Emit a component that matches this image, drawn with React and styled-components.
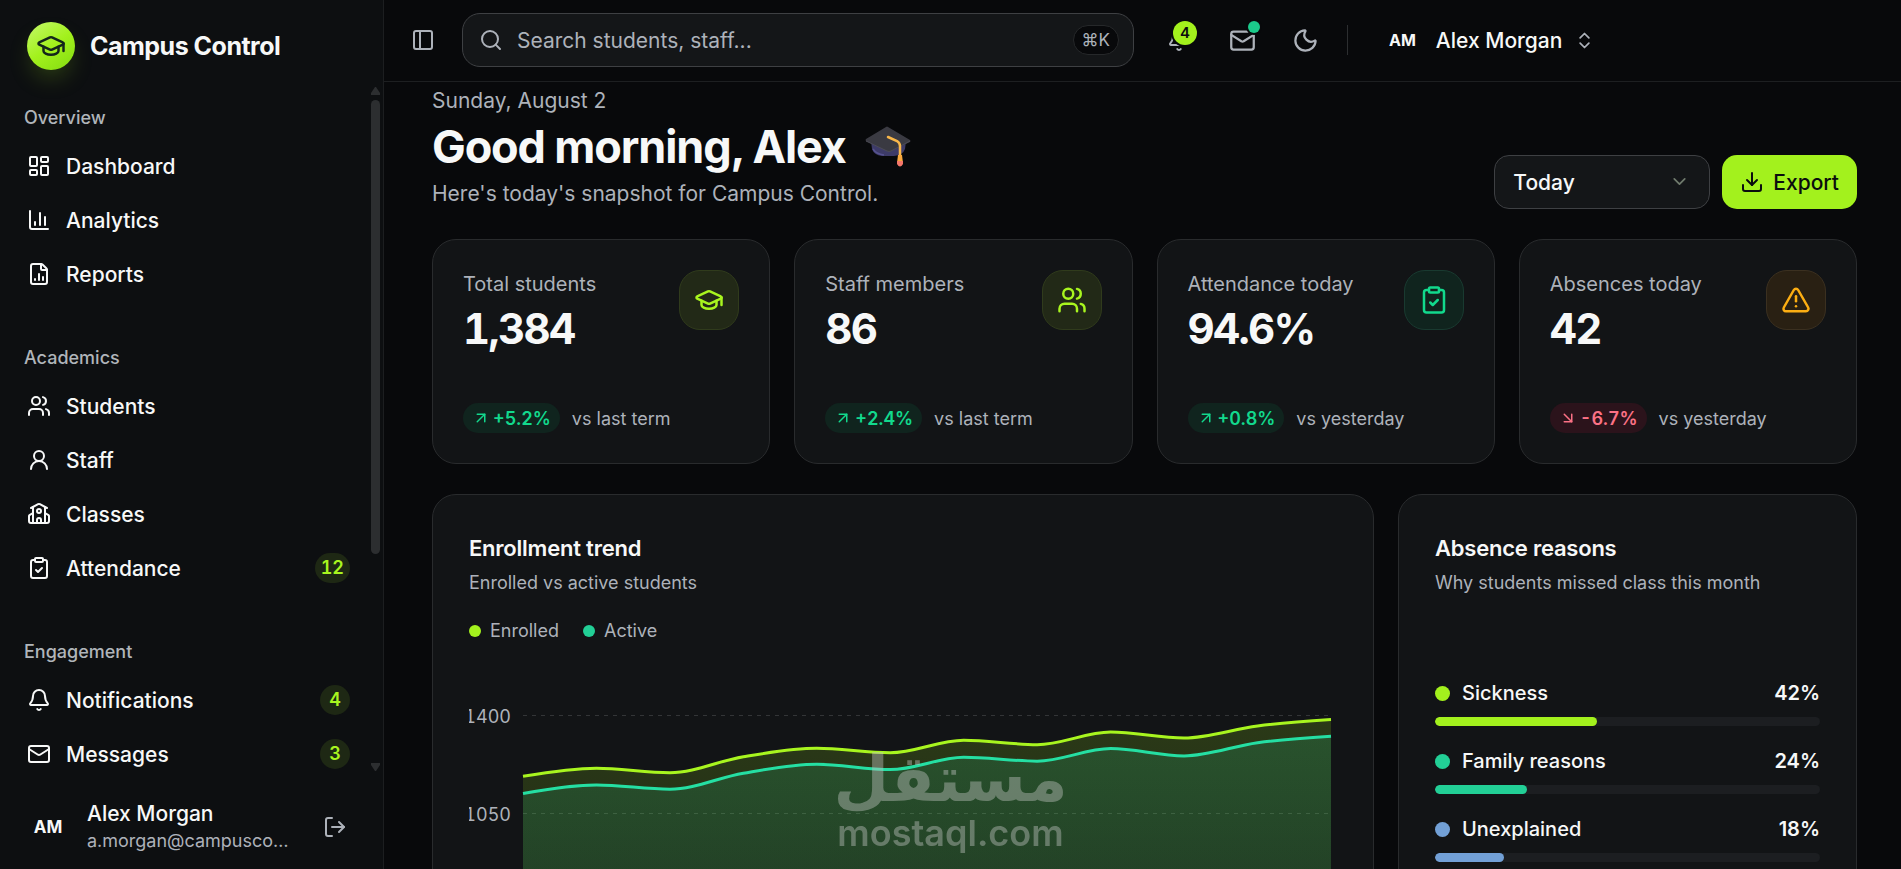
import React, { useState } from 'react';
import styled, { createGlobalStyle } from 'styled-components';
import {
  LayoutDashboard,
  ChartColumn,
  FileChartColumn,
  Users,
  UserRound,
  School,
  ClipboardCheck,
  Bell,
  Mail,
  LogOut,
  PanelLeft,
  Search,
  Moon,
  ChevronsUpDown,
  ChevronDown,
  Download,
  GraduationCap,
  TriangleAlert,
  ArrowUpRight,
  ArrowDownRight,
} from 'lucide-react';

const GlobalStyle = createGlobalStyle`
  * {
    box-sizing: border-box;
  }
  body {
    margin: 0;
    background: #08090b;
    color: #f7f8f8;
    font-family: Inter, 'Liberation Sans', sans-serif;
    font-size: 18px;
    overflow: hidden;
  }
  h1, h2, p, ul {
    margin: 0;
    padding: 0;
  }
  ul {
    list-style: none;
  }
  button, input, select {
    font-family: inherit;
    color: inherit;
  }
  button {
    padding: 0;
    border: 0;
    background: none;
    cursor: pointer;
  }
`;

const Layout = styled.div`
  display: grid;
  grid-template-columns: 384px minmax(0, 1fr);
  height: 100vh;
  overflow: hidden;
`;

const Sidebar = styled.aside`
  display: flex;
  flex-direction: column;
  min-height: 0;
  background: #0d0f11;
  border-right: 1px solid #1c1e20;
`;

const Brand = styled.div`
  display: flex;
  align-items: center;
  gap: 15px;
  padding: 22px 27px 14px;
  font-size: 25px;
  line-height: 48px;
  font-weight: 700;
  letter-spacing: -0.02em;

  .logo {
    display: grid;
    place-items: center;
    width: 48px;
    height: 48px;
    border-radius: 50%;
    color: #14261b;
    background: linear-gradient(145deg, #c5f96c 0%, #a3f11d 50%, #83dc10 100%);
    box-shadow: 0 12px 24px -6px rgba(163, 241, 29, 0.25);
  }
`;

const NavArea = styled.div`
  flex: 1;
  display: flex;
  min-height: 0;
`;

const Nav = styled.nav`
  flex: 1;
  display: flex;
  flex-direction: column;
  gap: 36px;
  padding: 13px 21px 0 24px;
  overflow: hidden;
`;

const GroupLabel = styled.p`
  height: 42px;
  line-height: 42px;
  font-size: 18px;
  font-weight: 500;
  color: #b0b5ba;
`;

const NavLink = styled.a`
  display: flex;
  align-items: center;
  gap: 15px;
  height: 54px;
  padding-left: 3px;
  font-size: 21px;
  font-weight: 500;
  color: #f7f8f8;
  text-decoration: none;

  .count {
    min-width: 30px;
    height: 30px;
    margin-left: auto;
    padding: 0 6px;
    border-radius: 15px;
    background: #1e2814;
    color: #a8f51f;
    font-size: 18px;
    font-weight: 600;
    font-variant-numeric: tabular-nums;
    line-height: 30px;
    text-align: center;
  }
`;

const Scrollbar = styled.div`
  display: flex;
  flex-direction: column;
  align-items: center;
  width: 12px;
  padding: 3px 3px 2px 0;

  .thumb {
    width: 9px;
    height: 454px;
    margin: 5px 0 auto;
    border-radius: 5px;
    background: #2c2e30;
  }
`;

const ScrollArrow = styled.svg`
  width: 9px;
  height: 8px;
  fill: #2c2e30;
`;

const Account = styled.div`
  display: flex;
  align-items: center;
  gap: 15px;
  padding: 27px 36px 15px 24px;

  .avatar {
    width: 48px;
    font-size: 17px;
    font-weight: 700;
    text-align: center;
  }
  .who {
    flex: 1;
    min-width: 0;
    margin-right: 18px;
  }
  .name {
    font-size: 21px;
    line-height: 27px;
    font-weight: 500;
  }
  .email {
    overflow: hidden;
    color: #adb2ba;
    font-size: 18px;
    line-height: 27px;
    text-overflow: ellipsis;
    white-space: nowrap;
  }
  button {
    display: flex;
    color: #adb2ba;
  }
`;

const Page = styled.div`
  display: flex;
  flex-direction: column;
  min-height: 0;
`;

const Topbar = styled.header`
  flex: none;
  display: flex;
  align-items: center;
  height: 82px;
  padding: 0 27px 1px;
  border-bottom: 1px solid #1d1f21;
`;

const SearchBox = styled.label`
  display: flex;
  align-items: center;
  gap: 14px;
  flex: 0 1 672px;
  height: 54px;
  margin: 0 15px 0 27px;
  padding: 0 14px 0 16px;
  border: 1px solid #3e4043;
  border-radius: 18px;
  background: #141618;
  color: #adb2ba;

  input {
    flex: 1;
    min-width: 0;
    padding: 0;
    border: 0;
    outline: 0;
    background: none;
    font-size: 21px;
  }
  input::placeholder {
    color: #adb2ba;
    opacity: 1;
  }
  kbd {
    padding: 0 8px;
    border: 1px solid #26282a;
    border-radius: 15px;
    background: #08090b;
    font-family: inherit;
    font-size: 17px;
    line-height: 28px;
  }
`;

const IconButton = styled.button`
  position: relative;
  display: grid;
  place-items: center;
  width: ${({ $narrow }) => ($narrow ? 24 : 60)}px;
  height: 54px;
  margin-right: ${({ $narrow }) => ($narrow ? 0 : 3)}px;
  color: #adb2ba;

  .badge {
    position: absolute;
    top: 8px;
    right: 12px;
    width: 24px;
    height: 24px;
    border-radius: 50%;
    background: #a3f11d;
    box-shadow: 0 0 0 2px #08090b;
    color: #0b0d0e;
    font-size: 15px;
    font-weight: 600;
    line-height: 24px;
  }
  .dot {
    position: absolute;
    top: 8px;
    right: 12px;
    width: 12px;
    height: 12px;
    border-radius: 50%;
    background: #1bcb8b;
    box-shadow: 0 0 0 2px #08090b;
  }
`;

const Divider = styled.span`
  width: 1px;
  height: 30px;
  margin: 0 41px 0 9px;
  background: #2c2e30;
`;

const UserMenu = styled.button`
  display: flex;
  align-items: center;
  gap: 20px;
  font-size: 21px;
  font-weight: 500;

  .initials {
    font-size: 16px;
    font-weight: 700;
  }
  svg {
    margin-left: -8px;
    color: #adb2ba;
  }
`;

const Content = styled.main`
  flex: 1;
  min-height: 0;
  padding: 4px 44px 0 48px;
  overflow: hidden;
`;

const Intro = styled.section`
  display: flex;
  align-items: flex-end;
  justify-content: space-between;
  margin-bottom: 30px;
  color: #adb2ba;
  font-size: 21px;
  line-height: 30px;

  h1 {
    display: flex;
    align-items: center;
    gap: 18px;
    margin: 2px 0 4px;
    color: #f7f8f8;
    font-size: 45px;
    line-height: 57px;
    font-weight: 700;
    letter-spacing: -0.025em;
  }
`;

const Actions = styled.div`
  display: flex;
  gap: 12px;
`;

const Period = styled.div`
  position: relative;
  width: 216px;
  color: #adb2ba;

  select {
    appearance: none;
    width: 100%;
    height: 54px;
    padding: 0 48px 0 18px;
    border: 1px solid #3e4043;
    border-radius: 15px;
    background: #141618;
    color: #f7f8f8;
    font-size: 21px;
    font-weight: 500;
  }
  svg {
    position: absolute;
    top: 16px;
    right: 20px;
    color: #6f7a6c;
    pointer-events: none;
  }
`;

const ExportButton = styled.button`
  display: flex;
  align-items: center;
  justify-content: center;
  gap: 9px;
  height: 54px;
  padding: 0 18px;
  border-radius: 15px;
  background: #a3f11d;
  color: #0b0d0e;
  font-size: 21px;
  font-weight: 500;
`;

const Grid = styled.div`
  display: grid;
  grid-template-columns: repeat(12, minmax(0, 1fr));
  column-gap: 24px;
  row-gap: 30px;
`;

const Card = styled.section`
  grid-column: span ${({ $span }) => $span};
  padding: ${({ $pad }) => $pad || 36}px;
  border: 1px solid #292b2d;
  border-radius: 24px;
  background: #121416;
`;

const StatTop = styled.div`
  display: flex;
  justify-content: space-between;
  height: 133px;
`;

const StatLabel = styled.p`
  color: #adb2ba;
  font-size: 20px;
  line-height: 28px;
`;

const StatValue = styled.p`
  font-size: 42px;
  line-height: 62px;
  font-weight: 700;
  font-variant-numeric: tabular-nums;
  letter-spacing: -0.04em;
`;

const tones = {
  lime: { color: '#a8f51f', tint: '#222917', edge: '#303b1c' },
  green: { color: '#12d98d', tint: '#10241e', edge: '#193a30' },
  amber: { color: '#fcae13', tint: '#292013', edge: '#3b3020' },
  red: { color: '#fb7185', tint: '#2b131b', edge: '#2b131b' },
};

const IconTile = styled.span`
  display: grid;
  place-items: center;
  width: 60px;
  height: 60px;
  border: 1px solid ${({ $tone }) => tones[$tone].edge};
  border-radius: 21px;
  background: ${({ $tone }) => tones[$tone].tint};
  color: ${({ $tone }) => tones[$tone].color};
`;

const StatFoot = styled.div`
  display: flex;
  align-items: center;
  gap: 12px;
  color: #adb2ba;
  font-size: 18px;
`;

const Delta = styled.span`
  display: flex;
  align-items: center;
  gap: 3px;
  height: 30px;
  padding: 0 9px;
  border-radius: 15px;
  background: ${({ $tone }) => tones[$tone].tint};
  color: ${({ $tone }) => tones[$tone].color};
  font-weight: 600;
  font-variant-numeric: tabular-nums;
`;

const CardTitle = styled.h2`
  font-size: 22px;
  line-height: 34px;
  font-weight: 600;
  letter-spacing: -0.01em;
`;

const CardNote = styled.p`
  margin-top: 3px;
  color: #adb2ba;
  font-size: 18px;
  line-height: 30px;
`;

const Legend = styled.ul`
  display: flex;
  gap: 24px;
  margin-top: 18px;
  color: #adb2ba;
  font-size: 18px;
  line-height: 30px;

  li {
    display: flex;
    align-items: center;
    gap: 9px;
  }
`;

const Dot = styled.span`
  width: ${({ $size }) => $size}px;
  height: ${({ $size }) => $size}px;
  border-radius: 50%;
  background: ${({ $color }) => $color};
`;

const Chart = styled.div`
  display: flex;
  margin-top: 69px;
  padding-right: 6px;

  svg {
    flex: 1;
    min-width: 0;
    height: 392px;
    overflow: visible;
  }
`;

const Ticks = styled.ul`
  width: 54px;
  padding-right: 12px;
  margin-top: -13px;
  color: #adb2ba;
  font-size: 18px;
  font-variant-numeric: tabular-nums;
  line-height: 30px;

  li {
    display: flex;
    justify-content: flex-end;
    height: 98px;
    overflow: hidden;
  }
`;

const Reasons = styled.ul`
  display: flex;
  flex-direction: column;
  gap: 20px;
  margin-top: 80px;
`;

const Reason = styled.li`
  font-size: 20px;
  line-height: 30px;
  font-weight: 500;

  .row {
    display: flex;
    align-items: center;
    gap: 12px;
  }
  .share {
    margin-left: auto;
    font-weight: 600;
  }
  .track {
    height: 9px;
    margin-top: 9px;
    border-radius: 5px;
    background: #1c1e21;
    overflow: hidden;
  }
  .fill {
    height: 100%;
    border-radius: 5px;
  }
`;

const Watermark = styled.div`
  position: fixed;
  right: 0;
  bottom: 18px;
  left: 0;
  color: #c3c6c3;
  opacity: 0.42;
  text-align: center;
  pointer-events: none;

  .ar {
    font-family: 'DejaVu Sans', sans-serif;
    font-size: 64px;
    line-height: 72px;
    font-weight: 700;
  }
  .en {
    font-size: 36px;
    line-height: 36px;
    font-weight: 600;
  }
`;

const navGroups = [
  {
    label: 'Overview',
    items: [
      { name: 'Dashboard', Icon: LayoutDashboard },
      { name: 'Analytics', Icon: ChartColumn },
      { name: 'Reports', Icon: FileChartColumn },
    ],
  },
  {
    label: 'Academics',
    items: [
      { name: 'Students', Icon: Users },
      { name: 'Staff', Icon: UserRound },
      { name: 'Classes', Icon: School },
      { name: 'Attendance', Icon: ClipboardCheck, count: 12 },
    ],
  },
  {
    label: 'Engagement',
    items: [
      { name: 'Notifications', Icon: Bell, count: 4 },
      { name: 'Messages', Icon: Mail, count: 3 },
    ],
  },
];

const stats = [
  { label: 'Total students', value: '1,384', Icon: GraduationCap, tone: 'lime', delta: '+5.2%', since: 'vs last term' },
  { label: 'Staff members', value: '86', Icon: Users, tone: 'lime', delta: '+2.4%', since: 'vs last term' },
  { label: 'Attendance today', value: '94.6%', Icon: ClipboardCheck, tone: 'green', delta: '+0.8%', since: 'vs yesterday' },
  { label: 'Absences today', value: '42', Icon: TriangleAlert, tone: 'amber', delta: '-6.7%', since: 'vs yesterday' },
];

const reasons = [
  { name: 'Sickness', share: 42, color: '#a3f11d' },
  { name: 'Family reasons', share: 24, color: '#22cf96' },
  { name: 'Unexplained', share: 18, color: '#72a0d6' },
];

const enrolled = [1181, 1210, 1194, 1251, 1281, 1265, 1310, 1294, 1339, 1318, 1361, 1384];
const active = [1120, 1150, 1135, 1192, 1224, 1205, 1249, 1235, 1280, 1254, 1301, 1324];
const gridLines = [1400, 1050, 700, 350];
const ticks = [1400, 1050];

const CHART_W = 808;
const CHART_H = 392;
const CHART_MAX = 1400;

// monotone cubic, so the line never overshoots a month's value
const linePath = (values) => {
  const step = CHART_W / (values.length - 1);
  const y = values.map((v) => CHART_H * (1 - v / CHART_MAX));
  const slope = y.slice(1).map((v, i) => (v - y[i]) / step);
  const m = y.map((_, i) => {
    if (i === 0 || i === y.length - 1) return null;
    const a = slope[i - 1];
    const b = slope[i];
    if (a * b <= 0) return 0;
    return Math.sign(a) * 2 * Math.min(Math.abs(a), Math.abs(b), Math.abs(a + b) / 4);
  });
  m[0] = (3 * slope[0] - m[1]) / 2;
  m[m.length - 1] = (3 * slope[slope.length - 1] - m[m.length - 2]) / 2;

  return y.reduce((d, v, i) => {
    if (i === 0) return `M0,${v}`;
    const x0 = (i - 1) * step;
    const x1 = i * step;
    const c = step / 3;
    return `${d}C${x0 + c},${y[i - 1] + m[i - 1] * c} ${x1 - c},${v - m[i] * c} ${x1},${v}`;
  }, '');
};

const areaPath = (values) => `${linePath(values)}V${CHART_H}H0Z`;

const CapEmoji = () => (
  <svg width="48" height="48" viewBox="0 0 48 48" role="img" aria-label="graduation cap">
    <path d="M7 18 L8 26 Q10 32 18 33 L30 33 Q39 32 41 26 L42 18 Z" fill="#3d3b68" />
    <path d="M9 26 Q12 31 20 32" fill="none" stroke="#565291" strokeWidth="1.5" />
    <path d="M24 4 L46 17 Q47 18 46 19 L27 28 Q25 29 23 28 L2 18 Q1 17 2 16 L22 4 Q23 3 24 4 Z" fill="#3a3a42" />
    <path d="M2 18 L23 28 Q25 29 27 28 L46 18" fill="none" stroke="#4c4c56" strokeWidth="1" />
    <path d="M24 14 L33 18 Q36 20 36 23 V33" fill="none" stroke="#f9b74a" strokeWidth="2.5" strokeLinecap="round" />
    <path d="M34 32 h4 l1 8 q-3 5 -6 0 Z" fill="#f9a83f" />
    <path d="M33 38 h6 v3 q-3 5 -6 0 Z" fill="#f4766a" />
  </svg>
);

const App = () => {
  const [period, setPeriod] = useState('Today');

  return (
    <>
      <GlobalStyle />
      <Layout>
        <Sidebar>
          <Brand>
            <span className="logo">
              <GraduationCap size={30} />
            </span>
            Campus Control
          </Brand>
          <NavArea>
            <Nav>
              {navGroups.map((group) => (
                <div key={group.label}>
                  <GroupLabel>{group.label}</GroupLabel>
                  {group.items.map(({ name, Icon, count }) => (
                    <NavLink key={name} href={`#${name.toLowerCase()}`}>
                      <Icon size={24} />
                      {name}
                      {count && <span className="count">{count}</span>}
                    </NavLink>
                  ))}
                </div>
              ))}
            </Nav>
            <Scrollbar aria-hidden="true">
              <ScrollArrow viewBox="0 0 9 8">
                <path d="M4 0h1l4 6v2H0V6z" />
              </ScrollArrow>
              <span className="thumb" />
              <ScrollArrow viewBox="0 0 9 8">
                <path d="M0 0h9v2L5 8H4L0 2z" />
              </ScrollArrow>
            </Scrollbar>
          </NavArea>
          <Account>
            <span className="avatar">AM</span>
            <div className="who">
              <p className="name">Alex Morgan</p>
              <p className="email">a.morgan@campuscontrol.edu</p>
            </div>
            <button type="button" aria-label="Log out">
              <LogOut size={24} />
            </button>
          </Account>
        </Sidebar>

        <Page>
          <Topbar>
            <IconButton type="button" $narrow aria-label="Toggle sidebar">
              <PanelLeft size={24} />
            </IconButton>
            <SearchBox>
              <Search size={24} />
              <input type="search" placeholder="Search students, staff..." aria-label="Search students, staff" />
              <kbd>⌘K</kbd>
            </SearchBox>
            <IconButton type="button" aria-label="Notifications">
              <Bell size={24} />
              <span className="badge">4</span>
            </IconButton>
            <IconButton type="button" aria-label="Messages">
              <Mail size={27} />
              <span className="dot" />
            </IconButton>
            <IconButton type="button" aria-label="Dark mode">
              <Moon size={27} />
            </IconButton>
            <Divider />
            <UserMenu type="button">
              <span className="initials">AM</span>
              Alex Morgan
              <ChevronsUpDown size={21} />
            </UserMenu>
          </Topbar>

          <Content>
            <Intro>
              <div>
                <p>Sunday, August 2</p>
                <h1>
                  Good morning, Alex
                  <CapEmoji />
                </h1>
                <p>Here's today's snapshot for Campus Control.</p>
              </div>
              <Actions>
                <Period>
                  <select aria-label="Period" value={period} onChange={(e) => setPeriod(e.target.value)}>
                    <option>Today</option>
                    <option>This week</option>
                    <option>This month</option>
                  </select>
                  <ChevronDown size={21} />
                </Period>
                <ExportButton type="button">
                  <Download size={24} />
                  Export
                </ExportButton>
              </Actions>
            </Intro>

            <Grid>
              {stats.map(({ label, value, Icon, tone, delta, since }) => {
                const down = delta.startsWith('-');
                const Arrow = down ? ArrowDownRight : ArrowUpRight;
                return (
                  <Card key={label} $span={3} $pad={30}>
                    <StatTop>
                      <div>
                        <StatLabel>{label}</StatLabel>
                        <StatValue>{value}</StatValue>
                      </div>
                      <IconTile $tone={tone}>
                        <Icon size={30} />
                      </IconTile>
                    </StatTop>
                    <StatFoot>
                      <Delta $tone={down ? 'red' : 'green'}>
                        <Arrow size={18} />
                        {delta}
                      </Delta>
                      {since}
                    </StatFoot>
                  </Card>
                );
              })}

              <Card $span={8}>
                <CardTitle>Enrollment trend</CardTitle>
                <CardNote>Enrolled vs active students</CardNote>
                <Legend>
                  <li>
                    <Dot $size={12} $color="#a3f11d" />
                    Enrolled
                  </li>
                  <li>
                    <Dot $size={12} $color="#22cf96" />
                    Active
                  </li>
                </Legend>
                <Chart>
                  <Ticks>
                    {ticks.map((t) => (
                      <li key={t}>{t}</li>
                    ))}
                  </Ticks>
                  <svg viewBox={`0 0 ${CHART_W} ${CHART_H}`} preserveAspectRatio="none">
                    <defs>
                      <linearGradient id="enrolledFill" x1="0" y1="0" x2="0" y2="1">
                        <stop offset="0" stopColor="#a3f11d" stopOpacity="0.17" />
                        <stop offset="1" stopColor="#a3f11d" stopOpacity="0.04" />
                      </linearGradient>
                      <linearGradient id="activeFill" x1="0" y1="0" x2="0" y2="1">
                        <stop offset="0" stopColor="#22cf96" stopOpacity="0.17" />
                        <stop offset="1" stopColor="#22cf96" stopOpacity="0.04" />
                      </linearGradient>
                    </defs>
                    {gridLines.map((t, i) => (
                      <path key={t} d={`M0,${i * 98 + 0.5}H${CHART_W}`} stroke="#333537" strokeDasharray="4 5" vectorEffect="non-scaling-stroke" />
                    ))}
                    <path d={areaPath(enrolled)} fill="url(#enrolledFill)" />
                    <path d={areaPath(active)} fill="url(#activeFill)" />
                    <path d={linePath(enrolled)} fill="none" stroke="#a8f51f" strokeWidth="3" vectorEffect="non-scaling-stroke" />
                    <path d={linePath(active)} fill="none" stroke="#25dfa3" strokeWidth="3" vectorEffect="non-scaling-stroke" />
                  </svg>
                </Chart>
              </Card>

              <Card $span={4}>
                <CardTitle>Absence reasons</CardTitle>
                <CardNote>Why students missed class this month</CardNote>
                <Reasons>
                  {reasons.map(({ name, share, color }) => (
                    <Reason key={name}>
                      <div className="row">
                        <Dot $size={15} $color={color} />
                        {name}
                        <span className="share">{share}%</span>
                      </div>
                      <div className="track">
                        <div className="fill" style={{ width: `${share}%`, background: color }} />
                      </div>
                    </Reason>
                  ))}
                </Reasons>
              </Card>
            </Grid>
          </Content>
        </Page>
      </Layout>
      <Watermark>
        <div className="ar" lang="ar">مستقل</div>
        <div className="en">mostaql.com</div>
      </Watermark>
    </>
  );
};

export default App;
